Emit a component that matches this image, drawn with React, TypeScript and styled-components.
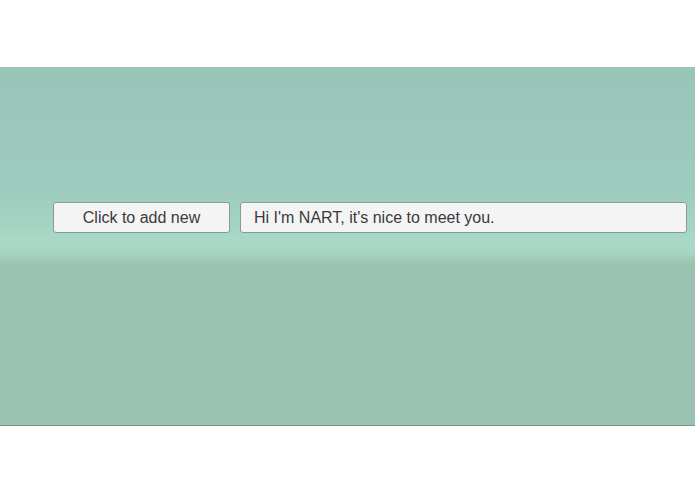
import React from "react";
import styled, { createGlobalStyle } from "styled-components";

const Global = createGlobalStyle`
  html, body { margin: 0; padding: 0; background: #ffffff; }
  body { font-family: "Liberation Sans", Arial, sans-serif; }
`;

const Page = styled.div`
  width: 695px;
  height: 494px;
  padding-top: 67px;
  box-sizing: border-box;
  background: #ffffff;
`;

const Scene = styled.div`
  height: 359px;
  box-sizing: border-box;
  border-bottom: 1px solid #76918a;
  background: linear-gradient(
    to bottom,
    #99c5b9 0px,
    #9dcbbd 120px,
    #a4d5c3 160px,
    #a9dac7 175px,
    #a6d6c3 186px,
    #9fcbb7 192px,
    #99c3b0 198px,
    #99c3b0 358px
  );
  display: flex;
  flex-direction: column;
  padding-top: 135px;
`;

const Row = styled.div`
  display: flex;
  align-items: center;
  gap: 10px;
  padding-left: 53px;
  padding-right: 8px;
`;

const Box = styled.div<{ $grow?: boolean; $center?: boolean }>`
  height: 31px;
  box-sizing: border-box;
  border: 1px solid #8b9994;
  border-radius: 3px;
  background: #f4f4f4;
  box-shadow: inset 0 1px 0 #fafafa;
  color: #3a3a3a;
  font-size: 16px;
  display: flex;
  align-items: center;
  justify-content: ${(p) => (p.$center ? "center" : "flex-start")};
  padding: 0 13px;
  ${(p) => (p.$grow ? "flex: 1;" : "width: 177px;")}
  white-space: nowrap;
`;

export default function App() {
  return (
    <>
      <Global />
      <Page>
        <Scene>
          <Row>
            <Box $center>Click to add new</Box>
            <Box $grow>Hi I'm NART, it's nice to meet you.</Box>
          </Row>
        </Scene>
      </Page>
    </>
  );
}
